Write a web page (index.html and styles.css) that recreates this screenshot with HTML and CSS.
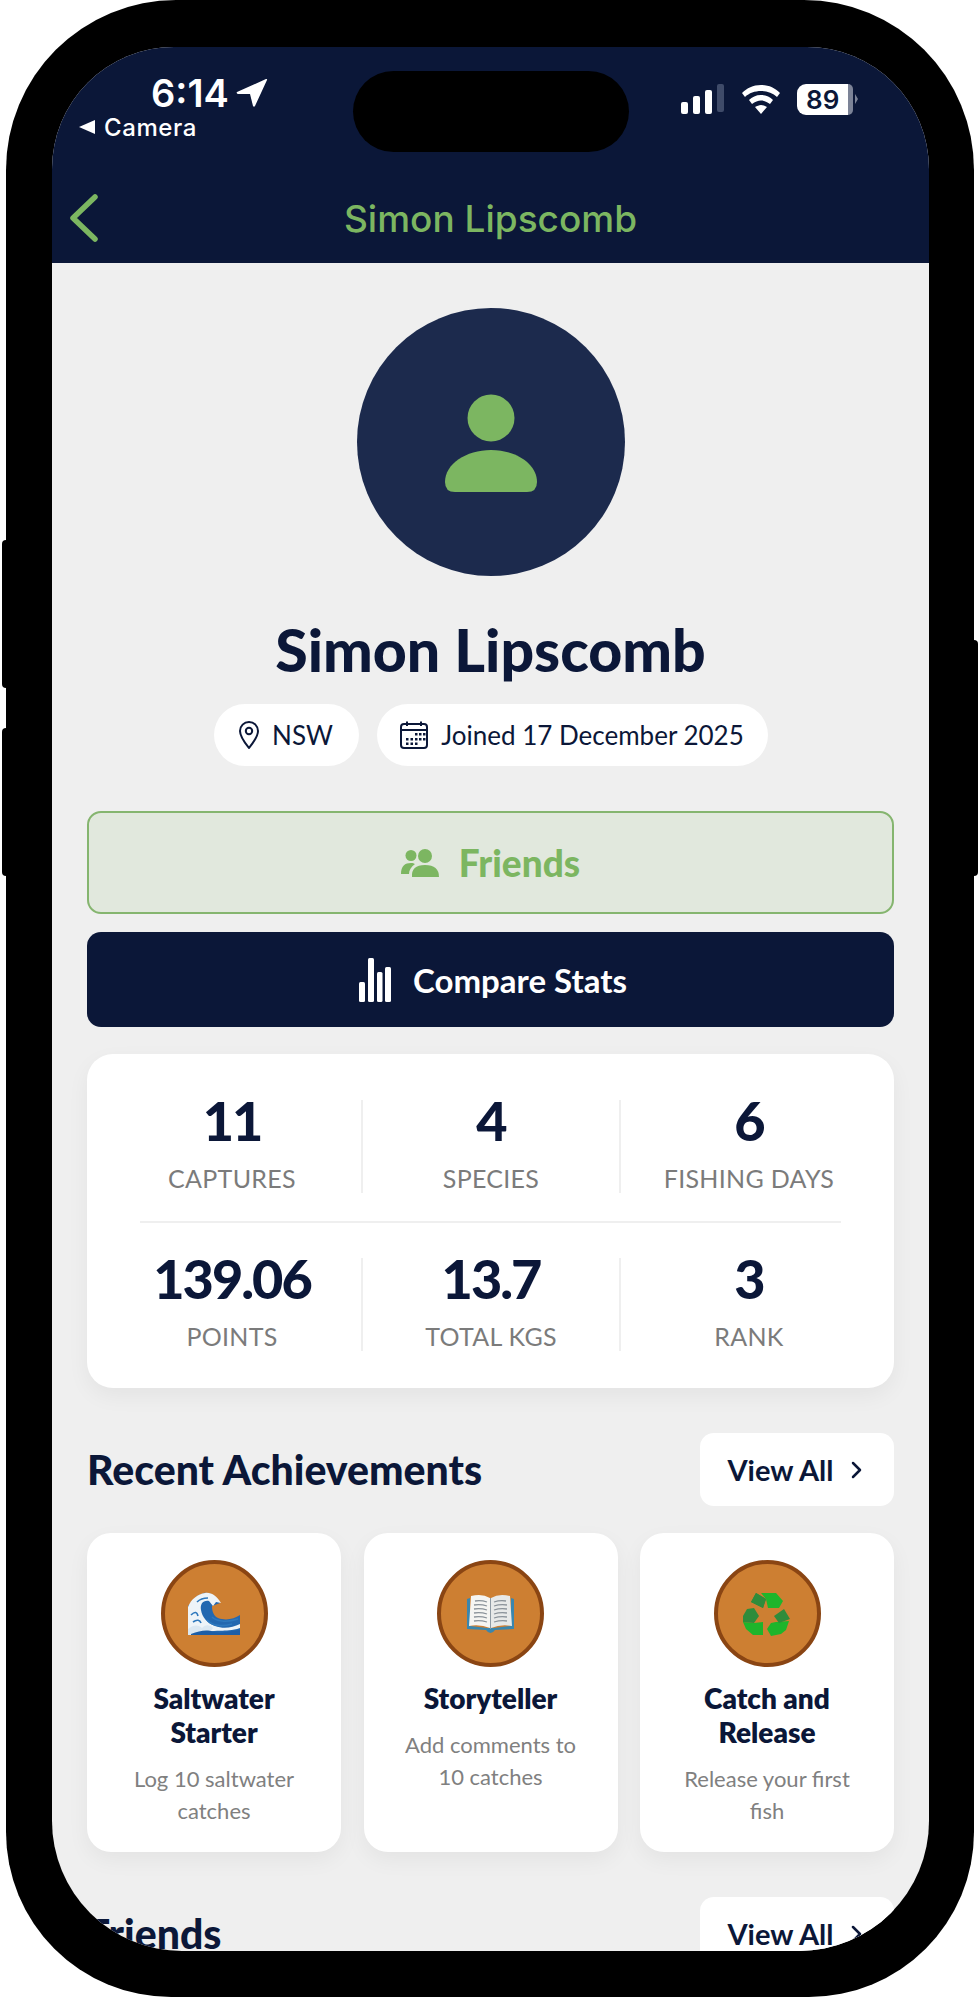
FILE: index.html
```html
<!DOCTYPE html>
<html lang="en">
<head>
    <meta charset="UTF-8">
    <title>Simon Lipscomb</title>
    <link rel="stylesheet" href="styles.css">
</head>
<body>
<div class="phone">
    <span class="side-btn btn-a"></span>
    <span class="side-btn btn-b"></span>
    <span class="side-btn btn-c"></span>

    <div class="screen">
        <header class="top">
            <span class="island"></span>
            <div class="status">
                <div class="status-left">
                    <div class="clock">6:14
                        <svg class="loc" width="32" height="30" viewBox="0 0 32 30"><path d="M1 14 L30 1 Q31.500 0.500 31 2 L19 28 Q18 29.500 17 28 L14 16 L2 16 Q0 15 1 14Z" fill="#fff"/></svg>
                    </div>
                    <div class="back-app">
                        <svg width="16" height="14" viewBox="0 0 16 14"><path d="M0 7 L16 0 V14Z" fill="#fff"/></svg>
                        Camera
                    </div>
                </div>
                <div class="status-right">
                    <svg width="44" height="30" viewBox="0 0 44 30"><rect x="0" y="18" width="7" height="12" rx="2" fill="#fff"/><rect x="12" y="12" width="7" height="18" rx="2" fill="#fff"/><rect x="24" y="6" width="7" height="24" rx="2" fill="#fff"/><rect x="36" y="0" width="7" height="28" rx="2" fill="#3f4b69"/></svg>
                    <svg width="38" height="29" viewBox="0 0 38 29"><path d="M19 0 C27 0 33 3 38 8 L35 12 C31 8 25 6 19 6 C13 6 7 8 3 12 L0 8 C5 3 11 0 19 0Z M19 10 C24 10 28 12 31 15 L28 19 C25 17 22 15.500 19 15.500 C16 15.500 13 17 10 19 L7 15 C10 12 14 10 19 10Z M19 20 C21 20 23 21 25 22 L19 29 L13 22 C15 21 17 20 19 20Z" fill="#fff"/></svg>
                    <div class="battery"><span class="batt-num">89</span><span class="batt-rest"></span><span class="batt-tip"></span></div>
                </div>
            </div>
            <div class="navbar">
                <svg class="nav-back" width="30" height="48" viewBox="0 0 30 48"><path d="M26 3 L4 24 L26 45" fill="none" stroke="#7cb661" stroke-width="5.500" stroke-linecap="round" stroke-linejoin="round"/></svg>
                <span class="nav-title">Simon Lipscomb</span>
            </div>
        </header>

        <main class="content">
            <div class="avatar">
                <svg class="avatar-icon" width="94" height="100" viewBox="0 0 94 100"><circle cx="47" cy="24" r="23.500" fill="#7cb661"/><path d="M1 88 C1 70 22 56 47 56 C72 56 93 70 93 88 Q93 98 83 98 H11 Q1 98 1 88Z" fill="#7cb661"/></svg>
            </div>
            <h1 class="name">Simon Lipscomb</h1>
            <div class="chips">
                <div class="chip chip-loc">
                    <svg width="20" height="28" viewBox="0 0 20 28"><path d="M10 1 C5 1 1 5 1 10 C1 16 6 22 10 27 C14 22 19 16 19 10 C19 5 15 1 10 1Z" fill="none" stroke="#0b1738" stroke-width="2"/><circle cx="10" cy="10" r="3.200" fill="none" stroke="#0b1738" stroke-width="2"/></svg>
                    NSW
                </div>
                <div class="chip chip-date">
                    <svg width="28" height="28" viewBox="0 0 28 28"><rect x="1" y="3" width="26" height="24" rx="3" fill="none" stroke="#0b1738" stroke-width="2"/><path d="M1 9 H27 M7 0.500 V5 M21 0.500 V5" stroke="#0b1738" stroke-width="2"/><g fill="#0b1738"><rect x="15" y="12" width="2.500" height="2.500"/><rect x="19" y="12" width="2.500" height="2.500"/><rect x="23" y="12" width="2.500" height="2.500"/><rect x="6" y="17" width="2.500" height="2.500"/><rect x="10.500" y="17" width="2.500" height="2.500"/><rect x="15" y="17" width="2.500" height="2.500"/><rect x="19" y="17" width="2.500" height="2.500"/><rect x="23" y="17" width="2.500" height="2.500"/><rect x="6" y="21.500" width="2.500" height="2.500"/><rect x="10.500" y="21.500" width="2.500" height="2.500"/><rect x="15" y="21.500" width="2.500" height="2.500"/></g></svg>
                    Joined 17 December 2025
                </div>
            </div>

            <div class="btn btn-friends">
                <svg width="38" height="28" viewBox="0 0 38 28"><circle cx="10" cy="6.500" r="5.500" fill="#7cb661"/><circle cx="24" cy="7" r="7" fill="#7cb661"/><path d="M0 25 C0 17 4 14 10 14 C12 14 13 14.500 14 15 C10 18 8 21 8 25Z" fill="#7cb661"/><path d="M11 28 Q10 16 24 16 Q38 16 38 28Z" fill="#7cb661"/></svg>
                Friends
            </div>
            <div class="btn btn-compare">
                <svg width="32" height="44" viewBox="0 0 32 44"><rect x="0" y="24" width="6" height="20" rx="1.500" fill="#fff"/><rect x="9" y="0" width="6" height="44" rx="1.500" fill="#fff"/><rect x="18" y="14" width="5.500" height="30" rx="1.500" fill="#fff"/><rect x="26" y="9" width="6" height="35" rx="1.500" fill="#fff"/></svg>
                Compare Stats
            </div>

            <section class="stats">
                <div class="stat-row">
                    <div class="stat"><div class="stat-val">11</div><div class="stat-label">CAPTURES</div></div>
                    <div class="stat"><div class="stat-val">4</div><div class="stat-label">SPECIES</div></div>
                    <div class="stat"><div class="stat-val">6</div><div class="stat-label">FISHING DAYS</div></div>
                </div>
                <hr class="stat-line">
                <div class="stat-row">
                    <div class="stat"><div class="stat-val">139.06</div><div class="stat-label">POINTS</div></div>
                    <div class="stat"><div class="stat-val">13.7</div><div class="stat-label">TOTAL KGS</div></div>
                    <div class="stat"><div class="stat-val">3</div><div class="stat-label">RANK</div></div>
                </div>
            </section>

            <div class="sec-head">
                <h2>Recent Achievements</h2>
                <div class="view-all">View All
                    <svg width="11" height="18" viewBox="0 0 11 18"><path d="M2 2 L9 9 L2 16" fill="none" stroke="#0b1738" stroke-width="2.500" stroke-linecap="round" stroke-linejoin="round"/></svg>
                </div>
            </div>

            <div class="badges">
                <div class="badge">
                    <div class="medal">
                        <svg width="52" height="45" viewBox="0 0 52 45">
                            <path d="M0 44 V15 L9 5 L16 2 C22 1 28 5 32 12 L24 15 C24 21 26 25 30 27 C38 30 46 28 52 24 V44Z" fill="#2368b0"/>
                            <path d="M0 44 V16 C3 8 10 3 17 2 C23 1 29 5 33 12 L28 11 L25 15 L21 10 C15 9 12 13 13 19 C14 26 19 32 27 35 C35 38 44 37 52 33 V37 C40 41 32 39 26 40 C18 41 8 39 0 44Z" fill="#eef4f8"/>
                            <path d="M0 38 C6 33 11 34 14 37 C18 33 22 34 25 37 L20 44 H0Z" fill="#dbe8f2"/>
                            <path d="M3 24 C7 20 9 21 10 25 M5 31 C9 28 12 29 13 32 M9 11 C12 8 16 7 20 7 M19 29 C24 35 34 36 44 33 M24 26 C28 30 38 32 50 28" fill="none" stroke="#2d78bd" stroke-width="1.600"/>
                            <path d="M3 43 C12 40 18 38 26 41 C34 43 42 40 52 39 V44 H3Z" fill="#1d5ea6"/>
                        </svg>
                    </div>
                    <div class="badge-title">Saltwater Starter</div>
                    <div class="badge-text">Log 10 saltwater catches</div>
                </div>
                <div class="badge">
                    <div class="medal">
                        <svg width="47" height="39" viewBox="0 0 47 39">
                            <path d="M0 5 L3 4 V32 L20 34 H27 L44 32 V4 L47 5 V35 L28 36 Q26 39 23.500 39 Q21 39 19 36 L0 35Z" fill="#3a86ad"/>
                            <path d="M4 2 Q15 -1 23 4 V34 Q13 30 2 32Z" fill="#f5f5f2"/>
                            <path d="M43 2 Q32 -1 24 4 V34 Q34 30 45 32Z" fill="#e7e9e8"/>
                            <path d="M8 7 Q14 6 20 8 M7 11 Q14 10 20 12 M7 15 Q14 14 20 16 M7 19 Q14 18 20 20 M7 23 Q14 22 20 24 M7 27 Q13 26 20 28 M39 7 Q33 6 27 8 M40 11 Q33 10 27 12 M40 15 Q33 14 27 16 M40 19 Q33 18 27 20 M40 23 Q33 22 27 24 M40 27 Q34 26 27 28" fill="none" stroke="#8b939a" stroke-width="1.300"/>
                            <path d="M23.500 4 V35" stroke="#8e9aa3" stroke-width="1"/>
                        </svg>
                    </div>
                    <div class="badge-title">Storyteller</div>
                    <div class="badge-text">Add comments to 10 catches</div>
                </div>
                <div class="badge">
                    <div class="medal">
                        <svg width="50" height="46" viewBox="0 0 50 46">
                            <polygon points="14,2 24,8 21,17 9,11" fill="#2f8c3b"/>
                            <polygon points="19,2 34,2 41,10 37,17 26,17 24,8" fill="#1eb52b"/>
                            <polygon points="14,2 24,8 21,17 9,11" fill="#2f8c3b"/>
                            <polygon points="1,31 12,32 21,31 21,44 11,44 4,38" fill="#1eb52b"/>
                            <polygon points="1,25 5,18 12,17 17,25 12,32 1,31" fill="#2f8c3b"/>
                            <polygon points="47,30 44,39 39,43 29,45 25,38 29,32 34,31" fill="#1eb52b"/>
                            <polygon points="32,25 42,18 48,28 37,32" fill="#2f8c3b"/>
                        </svg>
                    </div>
                    <div class="badge-title">Catch and Release</div>
                    <div class="badge-text">Release your first fish</div>
                </div>
            </div>

            <div class="sec-head sec-friends">
                <h2>Friends</h2>
                <div class="view-all">View All
                    <svg width="11" height="18" viewBox="0 0 11 18"><path d="M2 2 L9 9 L2 16" fill="none" stroke="#0b1738" stroke-width="2.500" stroke-linecap="round" stroke-linejoin="round"/></svg>
                </div>
            </div>
        </main>
    </div>
</div>
</body>
</html>
```

FILE: styles.css
```css
body {
    margin: 0;
    background-color: #fff;
    font-family: "Lato", "Liberation Sans", sans-serif;
    color: #0b1738;
}

/* phone frame */
.phone {
    position: relative;
    box-sizing: border-box;
    width: 968px;
    height: 1997px;
    margin-left: 6px;
    padding: 47px 45px 46px 46px;
    background-color: #000;
    border-radius: 170px 170px 165px 165px;
}

.side-btn {
    position: absolute;
    width: 6px;
    background-color: #000;
}
.btn-a { left: -4px; top: 540px; height: 148px; border-radius: 4px 0 0 4px; }
.btn-b { left: -4px; top: 728px; height: 148px; border-radius: 4px 0 0 4px; }
.btn-c { right: -4px; top: 640px; height: 236px; border-radius: 0 4px 4px 0; }

.screen {
    height: 1904px;
    border-radius: 122px 122px 130px 130px;
    overflow: hidden;
    background-color: #efefef;
}

/* header */
.top {
    position: relative;
    height: 216px;
    background-color: #0b1738;
    box-sizing: border-box;
    padding-top: 26px;
}

.island {
    position: absolute;
    left: 301px;
    top: 24px;
    width: 276px;
    height: 81px;
    border-radius: 41px;
    background-color: #000;
}

.status {
    display: flex;
    justify-content: space-between;
    font-family: "Inter", sans-serif;
    color: #fff;
}

.status-left {
    margin-left: 27px;
}

.clock {
    display: flex;
    align-items: center;
    gap: 7px;
    margin-left: 72px;
    height: 40px;
    font-size: 38px;
    font-weight: 600;
}

.back-app {
    display: flex;
    align-items: center;
    gap: 9px;
    height: 36px;
    margin-top: -4px;
    font-size: 24px;
    font-weight: 500;
    letter-spacing: 0.6px;
}

.status-right {
    display: flex;
    align-items: center;
    gap: 17px;
    height: 32px;
    margin: 10px 71px 0 0;
}

.battery {
    position: relative;
    display: flex;
    width: 61px;
    height: 31px;
    border-radius: 9px;
}

.batt-num {
    width: 54px;
    background-color: #fff;
    border-radius: 9px 0 0 9px;
    color: #0b1738;
    font-size: 26px;
    font-weight: 600;
    line-height: 31px;
    text-align: center;
}

.batt-rest {
    width: 5px;
    background-color: #7c8397;
    border-radius: 0 6px 6px 0;
}

.batt-tip {
    width: 0;
    height: 0;
    margin: 10px 0 0 2px;
    border-left: 3px solid #7c8397;
    border-top: 5px solid transparent;
    border-bottom: 5px solid transparent;
}

.navbar {
    position: relative;
    display: flex;
    align-items: center;
    justify-content: center;
    height: 48px;
    margin-top: 49px;
    font-family: "Inter", sans-serif;
}

.nav-back {
    position: absolute;
    left: 17px;
    top: 0;
}

.nav-title {
    color: #7cb661;
    font-size: 37px;
    font-weight: 500;
}

/* content */
.content {
    display: flex;
    flex-direction: column;
    padding: 45px 35px 0;
}

.avatar {
    display: flex;
    align-items: center;
    justify-content: center;
    align-self: center;
    width: 268px;
    height: 268px;
    border-radius: 50%;
    background-color: #1c2a4d;
}

.avatar-icon {
    margin-top: 3px;
}

.name {
    margin: 39px 0 0;
    height: 71px;
    font-size: 59px;
    font-weight: 900;
    line-height: 70px;
    text-align: center;
}

.chips {
    display: flex;
    justify-content: center;
    gap: 18px;
    margin-top: 18px;
}

.chip {
    display: flex;
    align-items: center;
    justify-content: center;
    gap: 13px;
    box-sizing: border-box;
    height: 62px;
    border-radius: 31px;
    background-color: #fff;
    font-size: 26px;
}
.chip-loc { width: 145px; }
.chip-date { width: 391px; }

.btn {
    display: flex;
    align-items: center;
    justify-content: center;
    box-sizing: border-box;
    border-radius: 14px;
    font-weight: 700;
}

.btn-friends {
    gap: 20px;
    height: 103px;
    margin-top: 45px;
    background-color: #e1e8dd;
    border: 2px solid #85b56f;
    color: #7cb661;
    font-size: 37px;
    font-weight: 900;
}

.btn-compare {
    gap: 22px;
    height: 95px;
    margin-top: 18px;
    padding-left: 5px;
    background-color: #0b1738;
    color: #fff;
    font-size: 33px;
}

/* stats */
.stats {
    box-sizing: border-box;
    height: 334px;
    margin-top: 27px;
    padding: 46px 16px 0;
    background-color: #fff;
    border-radius: 26px;
    box-shadow: 0 8px 22px rgba(0, 0, 0, 0.05);
}

.stat-row {
    display: grid;
    grid-template-columns: repeat(3, 258px);
    height: 85px;
}

.stat {
    text-align: center;
    border-left: 2px solid #efefef;
}
.stat:first-child { border-left: none; }

.stat-val {
    height: 42px;
    font-size: 54px;
    font-weight: 900;
    line-height: 42px;
    letter-spacing: -2px;
}

.stat-label {
    margin-top: 21px;
    color: #7b7b7b;
    font-size: 25px;
    line-height: 30px;
    letter-spacing: 0.3px;
}

.stat-line {
    height: 2px;
    margin: 36px 37px 35px;
    border: none;
    background-color: #efefef;
}

/* sections */
.sec-head {
    display: flex;
    align-items: center;
    justify-content: space-between;
    margin-top: 45px;
}

.sec-head h2 {
    margin: 0;
    font-size: 41px;
    font-weight: 900;
}

.sec-friends {
    margin-top: 45px;
}

.view-all {
    display: flex;
    align-items: center;
    justify-content: center;
    gap: 17px;
    box-sizing: border-box;
    width: 194px;
    height: 73px;
    padding-right: 5px;
    border-radius: 14px;
    background-color: #fff;
    font-size: 29px;
    font-weight: 700;
}

.badges {
    display: grid;
    grid-template-columns: repeat(3, 254px);
    justify-content: space-between;
    margin-top: 27px;
}

.badge {
    box-sizing: border-box;
    height: 319px;
    padding: 27px 32px 0;
    border-radius: 24px;
    background-color: #fff;
    text-align: center;
    box-shadow: 0 8px 22px rgba(0, 0, 0, 0.05);
}

.medal {
    display: flex;
    align-items: center;
    justify-content: center;
    box-sizing: border-box;
    width: 107px;
    height: 107px;
    margin: 0 auto;
    border: 4px solid #8a4513;
    border-radius: 50%;
    background-color: #cd7f32;
}

.badge-title {
    margin: 14px 0 0;
    font-size: 28px;
    font-weight: 800;
    line-height: 34px;
}

.badge-text {
    margin-top: 14px;
    color: #808080;
    font-size: 22px;
    line-height: 32px;
}
```
